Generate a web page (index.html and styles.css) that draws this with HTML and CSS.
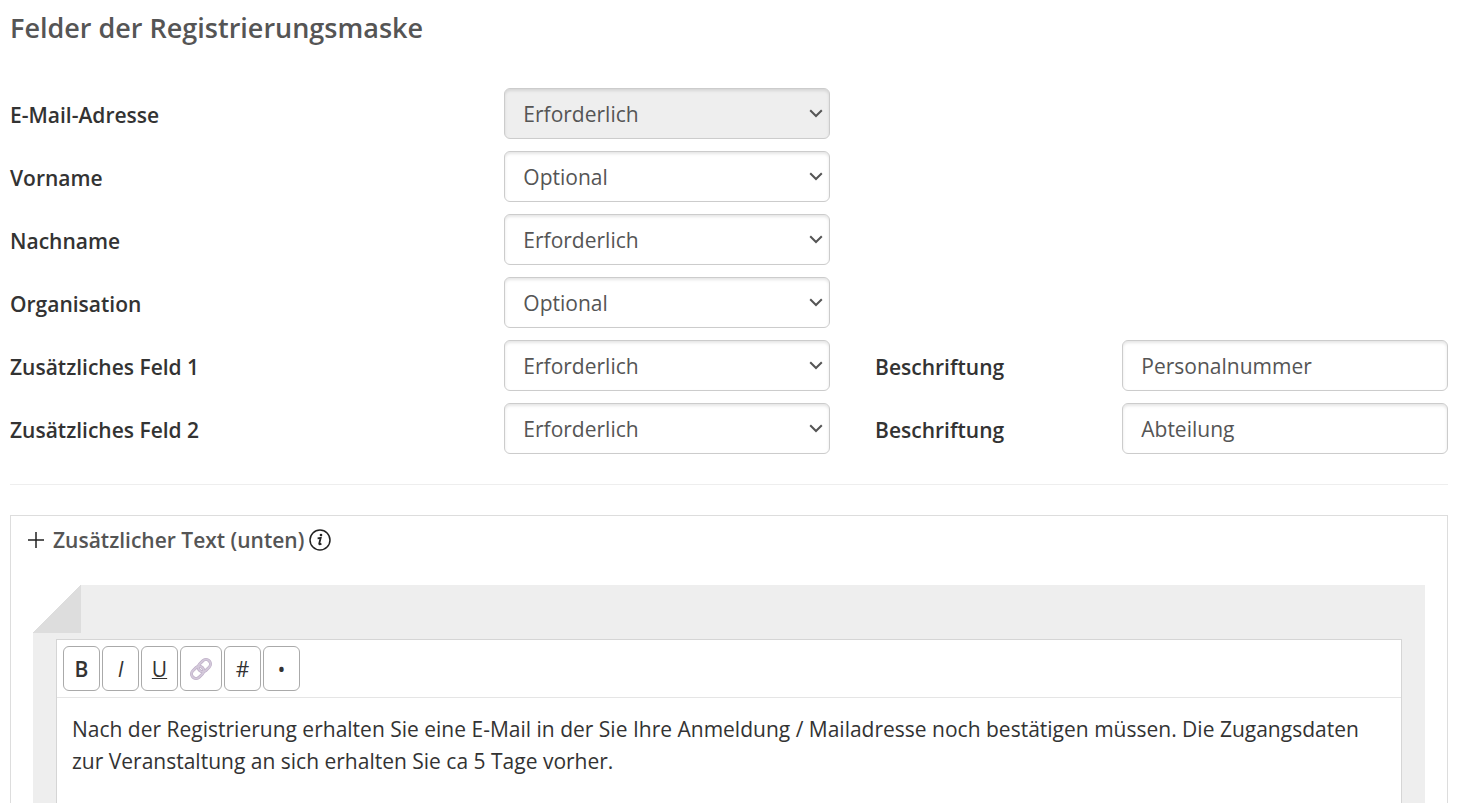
FILE: index.html
```html
<!doctype html>
<html lang="de">
  <head>
    <meta charset="UTF-8" />
    <meta name="viewport" content="width=device-width, initial-scale=1.0" />
    <title>Felder der Registrierungsmaske</title>
    <link rel="stylesheet" href="styles.css">
  </head>
  <body>
    <h2>Felder der Registrierungsmaske</h2>

    <form>
      <div class="form-row">
        <label class="name" for="email">E-Mail-Adresse</label>
        <div class="select">
          <select id="email" disabled>
            <option>Optional</option>
            <option selected>Erforderlich</option>
          </select>
          <svg viewBox="0 0 14 9"><path d="M1.2 1.2L7 7L12.8 1.2" /></svg>
        </div>
      </div>
      <div class="form-row">
        <label class="name" for="firstname">Vorname</label>
        <div class="select">
          <select id="firstname">
            <option selected>Optional</option>
            <option>Erforderlich</option>
          </select>
          <svg viewBox="0 0 14 9"><path d="M1.2 1.2L7 7L12.8 1.2" /></svg>
        </div>
      </div>
      <div class="form-row">
        <label class="name" for="lastname">Nachname</label>
        <div class="select">
          <select id="lastname">
            <option>Optional</option>
            <option selected>Erforderlich</option>
          </select>
          <svg viewBox="0 0 14 9"><path d="M1.2 1.2L7 7L12.8 1.2" /></svg>
        </div>
      </div>
      <div class="form-row">
        <label class="name" for="organisation">Organisation</label>
        <div class="select">
          <select id="organisation">
            <option selected>Optional</option>
            <option>Erforderlich</option>
          </select>
          <svg viewBox="0 0 14 9"><path d="M1.2 1.2L7 7L12.8 1.2" /></svg>
        </div>
      </div>
      <div class="form-row">
        <label class="name" for="extra1">Zusätzliches Feld 1</label>
        <div class="select">
          <select id="extra1">
            <option>Optional</option>
            <option selected>Erforderlich</option>
          </select>
          <svg viewBox="0 0 14 9"><path d="M1.2 1.2L7 7L12.8 1.2" /></svg>
        </div>
        <label class="caption" for="caption1">Beschriftung</label>
        <input type="text" id="caption1" value="Personalnummer">
      </div>
      <div class="form-row">
        <label class="name" for="extra2">Zusätzliches Feld 2</label>
        <div class="select">
          <select id="extra2">
            <option>Optional</option>
            <option selected>Erforderlich</option>
          </select>
          <svg viewBox="0 0 14 9"><path d="M1.2 1.2L7 7L12.8 1.2" /></svg>
        </div>
        <label class="caption" for="caption2">Beschriftung</label>
        <input type="text" id="caption2" value="Abteilung">
      </div>

      <hr>

      <section class="panel">
        <h3>
          <svg class="plus" viewBox="0 0 16 16"><path d="M8 0v16M0 8h16" /></svg>
          <label for="bottom-text">Zusätzlicher Text (unten)</label>
          <svg class="info" viewBox="0 0 22 22">
            <circle cx="11" cy="11" r="10" />
            <path class="stem" d="M8.6 9.3L11.7 8.8L10.2 14.6Q10 15.9 12.4 14.6" />
            <circle class="dot" cx="12" cy="6" r="1.3" />
          </svg>
        </h3>
        <div class="paper">
          <div class="editor">
            <div class="toolbar">
              <button type="button" class="bold">B</button>
              <button type="button" class="italic">I</button>
              <button type="button" class="underline">U</button>
              <button type="button" class="link" aria-label="Link">
                <svg viewBox="0 0 22 22">
                  <g transform="rotate(-45 11 11)">
                    <rect class="ring" x="-0.5" y="6.5" width="13.5" height="9" rx="4.5" />
                    <rect class="ring" x="9" y="6.5" width="13.5" height="9" rx="4.5" />
                    <rect class="shine" x="-0.5" y="6.5" width="13.5" height="9" rx="4.5" />
                    <rect class="shine" x="9" y="6.5" width="13.5" height="9" rx="4.5" />
                  </g>
                </svg>
              </button>
              <button type="button">#</button>
              <button type="button">•</button>
            </div>
            <textarea id="bottom-text">Nach der Registrierung erhalten Sie eine E-Mail in der Sie Ihre Anmeldung / Mailadresse noch bestätigen müssen. Die Zugangsdaten zur Veranstaltung an sich erhalten Sie ca 5 Tage vorher.</textarea>
          </div>
        </div>
      </section>
    </form>
  </body>
</html>
```
FILE: styles.css
```css
* {
  box-sizing: border-box;
}
html {
  scrollbar-width: none;
}
body {
  margin: 0;
  padding: 8px 10px;
  background: #fff;
  color: #333;
  font-family: "Open Sans", sans-serif;
  font-size: 21px;
  line-height: 32px;
}
h2 {
  margin: 0 0 40px;
  color: #555;
  font-size: 27px;
  font-weight: 600;
  line-height: 40px;
}
.form-row {
  display: grid;
  grid-template-columns: repeat(12, 1fr);
  column-gap: 45px;
  align-items: center;
  margin-bottom: 12px;
}
.name,
.caption {
  grid-column: span 4;
  padding-top: 2px;
  font-weight: 600;
}
.caption {
  grid-column: span 2;
}
.select {
  position: relative;
  grid-column: span 3;
}
.select svg {
  position: absolute;
  top: 21px;
  right: 7px;
  width: 14px;
  height: 9px;
  fill: none;
  stroke: #555;
  stroke-width: 2;
  pointer-events: none;
}
select,
input {
  display: block;
  width: 100%;
  height: 51px;
  padding: 0 18px;
  border: 1px solid #ccc;
  border-radius: 6px;
  background: #fff;
  box-shadow: inset 0 2px 3px rgba(0, 0, 0, 0.1);
  color: #555;
  font: inherit;
  appearance: none;
}
input {
  grid-column: span 3;
}
select:disabled {
  background: #eee;
  opacity: 1;
}
hr {
  margin: 30px 0;
  border: 0;
  border-top: 1px solid #eee;
}
.panel {
  padding: 8px 22px 22px;
  border: 1px solid #ddd;
}
h3 {
  display: flex;
  align-items: center;
  margin: 0 0 29px;
  color: #555;
  font-size: 21px;
  font-weight: 600;
  line-height: 32px;
}
.plus {
  width: 16px;
  height: 16px;
  margin: 0 9px 0 -5px;
  stroke: #222;
  stroke-width: 1.5;
}
.info {
  width: 22px;
  height: 22px;
  margin-left: 5px;
  fill: none;
  stroke: #222;
  stroke-width: 1.5;
}
.info .stem {
  stroke-width: 1.8;
}
.info .dot {
  fill: #222;
  stroke: none;
}
/* folded corner in the upper left */
.paper {
  padding: 54px 23px 23px;
  background: linear-gradient(135deg, #fff 50%, #ddd 50%) 0 0 / 48px 48px no-repeat #eee;
}
.editor {
  border: 1px solid #d5d5d5;
  background: #fff;
}
.toolbar {
  display: flex;
  gap: 2px;
  padding: 6px;
  border-bottom: 1px solid #e5e5e5;
}
button {
  width: 37px;
  height: 45px;
  padding: 0;
  border: 1px solid #aaa;
  border-radius: 6px;
  background: #fff;
  color: #333;
  font: inherit;
}
.bold {
  font-weight: 600;
}
.italic {
  font-style: italic;
}
.underline {
  text-decoration: underline;
  text-decoration-thickness: 1px;
}
.link {
  width: 42px;
}
.link svg {
  display: block;
  width: 22px;
  height: 22px;
  margin: 0 auto;
  fill: none;
}
.ring {
  stroke: #b9a9c3;
  stroke-width: 3;
}
.shine {
  stroke: #d3c8da;
  stroke-width: 2;
}
textarea {
  display: block;
  width: 100%;
  height: 180px;
  padding: 15px;
  border: 0;
  color: #333;
  font: inherit;
  resize: none;
}
```
